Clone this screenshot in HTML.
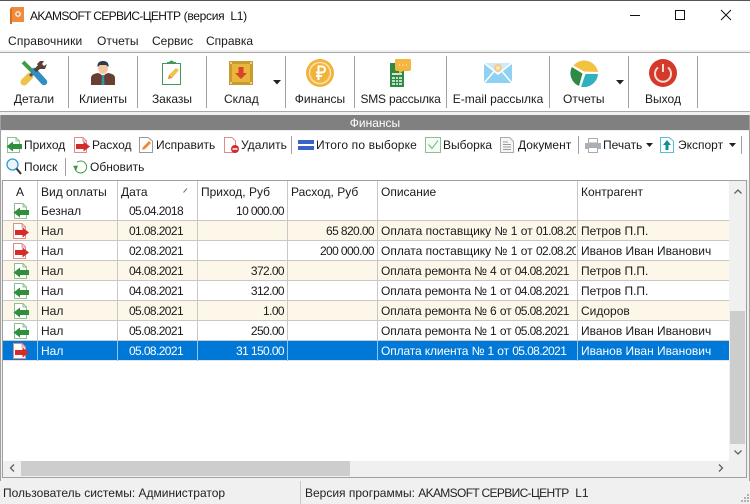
<!DOCTYPE html>
<html lang="ru"><head><meta charset="utf-8"><style>
html,body{margin:0;padding:0;width:750px;height:504px;overflow:hidden;background:#f0f0f0}
body{position:relative;font:12px "Liberation Sans",sans-serif;color:#1a1a1a}
.a,.t{position:absolute}
.t{white-space:nowrap;line-height:16px;height:16px}
.c{text-align:center}.r{text-align:right}
svg{position:absolute;overflow:visible}
.sep{position:absolute;width:1px;background:#a0a0a0}
.cell{position:absolute;overflow:hidden;white-space:nowrap;line-height:20px;height:20px}
.vl{position:absolute;width:1px;background:#c8c8c8}
.hl{position:absolute;height:1px;background:#c8c8c8;left:3px;width:726px}
.n{letter-spacing:-.6px}
.p{letter-spacing:-.12px}
.k{letter-spacing:-.65px}
</style></head><body>
<svg width="0" height="0" style="position:absolute"><defs>
<symbol id="in" viewBox="0 0 16 16"><path d="M1.500 .5H10L13.500 4V15.500H1.500Z" fill="#fff" stroke="#8fbe92"/><path d="M10 .5V4H13.500" fill="none" stroke="#8fbe92"/><path d="M.5 9.500 7 4.500V7H16V12H7V14.500Z" fill="#2f8f3d"/></symbol>
<symbol id="out" viewBox="0 0 16 16"><path d="M.5 .5H9L12.500 4V15.500H.5Z" fill="#fff" stroke="#dd8d8d"/><path d="M9 .5V4H12.500" fill="none" stroke="#dd8d8d"/><path d="M16 9.500 9.500 4.500V7H2V12H9.500V14.500Z" fill="#d42b2b"/></symbol>
</defs></svg>

<!-- title bar -->
<div class="a" style="left:0;top:0;width:750px;height:1px;background:#555"></div>
<div class="a" style="left:0;top:1px;width:750px;height:49px;background:#fff"></div>
<svg style="left:10px;top:7px" width="14" height="17" viewBox="0 0 14 17"><path d="M1 0H14V15H1Z" fill="#f08a3c"/><path d="M0 1.500H2V17H0Z" fill="#d96f22"/><circle cx="8" cy="7" r="2.200" fill="none" stroke="#fff" stroke-width="1.200"/></svg>
<div class="t" style="left:30px;top:8px;color:#111"><span class="k">AKAMSOFT СЕРВИС-ЦЕНТР</span> <span style="letter-spacing:-.3px">(версия&nbsp; L1)</span></div>
<svg style="left:630px;top:9px" width="110" height="13" viewBox="0 0 110 13"><path d="M0 6.500H10" stroke="#111"/><path d="M45.500 1.500H54.500V10.500H45.500Z" fill="none" stroke="#111"/><path d="M91 1 101 11M101 1 91 11" stroke="#111" fill="none"/></svg>
<div class="t" style="left:8px;top:33px;letter-spacing:.15px">Справочники</div>
<div class="t" style="left:97px;top:33px">Отчеты</div>
<div class="t" style="left:152px;top:33px">Сервис</div>
<div class="t" style="left:206px;top:33px">Справка</div>

<!-- main toolbar -->
<div class="a" style="left:0;top:52px;width:750px;height:1px;background:#a8a8a8"></div>
<div class="a" style="left:0;top:53px;width:750px;height:58px;background:#fff"></div>
<div class="a" style="left:0;top:111px;width:750px;height:1px;background:#a8a8a8"></div>
<div class="sep" style="left:68px;top:56px;height:52px"></div>
<div class="sep" style="left:137px;top:56px;height:52px"></div>
<div class="sep" style="left:206px;top:56px;height:52px"></div>
<div class="sep" style="left:285px;top:56px;height:52px"></div>
<div class="sep" style="left:354px;top:56px;height:52px"></div>
<div class="sep" style="left:446px;top:56px;height:52px"></div>
<div class="sep" style="left:549px;top:56px;height:52px"></div>
<div class="sep" style="left:628px;top:56px;height:52px"></div>
<div class="sep" style="left:697px;top:56px;height:52px"></div>

<svg style="left:21px;top:60px" width="27" height="26" viewBox="0 0 27 26"><path d="M2 2 14 14" stroke="#3f9a46" stroke-width="4"/><path d="M9 16 3 22" stroke="#f0c24a" stroke-width="7" stroke-linecap="round"/><path d="M13 12 9 16" stroke="#555" stroke-width="3"/><path d="M13 11 23 22" stroke="#2f8fc0" stroke-width="6.500" stroke-linecap="round"/><path d="M14 11 20 5" stroke="#5a4038" stroke-width="4"/><path d="M19 1 16 4 19 9 24 9 26 4 23 6 21 4 23 1Z" fill="#5a4038"/></svg>
<svg style="left:91px;top:61px" width="24" height="24" viewBox="0 0 24 24"><path d="M0 24V17Q0 13 7 12L12 14 17 12Q24 13 24 17V24Z" fill="#6a3f33"/><path d="M9 12H15L12 16Z" fill="#fff"/><path d="M11 14H13L13.500 24H10.500Z" fill="#2a9aa8"/><ellipse cx="12" cy="7" rx="5" ry="6" fill="#f4c5a3"/><path d="M6.500 6Q6 0 12 0T17.500 6L15 4H9Z" fill="#2c3a4a"/></svg>
<svg style="left:161px;top:60px" width="21" height="26" viewBox="0 0 21 26"><path d="M1.500 3.500H19.500V24.500H1.500Z" fill="#fff" stroke="#3f9a5c"/><path d="M6 4V2H8Q10.500-1 13 2H15V4Z" fill="#3f9a5c"/><path d="M7 19 8 15 15 8 18 10 11 18Z" fill="#f0c24a"/><path d="M7 19 8 15 11 18Z" fill="#e88c3a"/></svg>
<svg style="left:229px;top:61px" width="24" height="24" viewBox="0 0 24 24"><path d="M0 0H24V24H0Z" fill="#c99a2e"/><path d="M3 3H21V21H3Z" fill="#e9b63c"/><path d="M9.500 6H14.500V12H18L12 18 6 12H9.500Z" fill="#d9432a"/><g fill="#f5e2a8"><circle cx="2" cy="2" r="1"/><circle cx="22" cy="2" r="1"/><circle cx="2" cy="22" r="1"/><circle cx="22" cy="22" r="1"/></g></svg>
<svg style="left:273px;top:80px" width="8" height="5" viewBox="0 0 8 5"><path d="M0 0H8L4 4.500Z" fill="#222"/></svg>
<svg style="left:306px;top:59px" width="28" height="28" viewBox="0 0 28 28"><circle cx="14" cy="14" r="14" fill="#f1b33c"/><circle cx="14" cy="14" r="10.500" fill="none" stroke="#fbe3ae" stroke-width="1.500"/><path d="M12.500 21V7.500H16A3 3 0 0 1 16 13.500H10M10 17H16" fill="none" stroke="#fff" stroke-width="2"/></svg>
<svg style="left:389px;top:59px" width="23" height="28" viewBox="0 0 23 28"><path d="M1 4H15V28H1Z" fill="#2f8a46"/><path d="M3 14H13V16H3Z" fill="#cfe8d4"/><path d="M3 18H13V26H3Z" fill="#bfe0c6"/><path d="M3 20.500H13M3 23.500H13M6.500 18V26M9.500 18V26" stroke="#2f8a46"/><path d="M7 0H21Q22 0 22 1V10Q22 12 20 12H14L10 15V12H8Q6 12 6 10V1Q6 0 7 0Z" fill="#f3b73f"/><path d="M10 6H11M13.500 6H14.500M17 6H18" stroke="#fff"/></svg>
<svg style="left:484px;top:63px" width="28" height="20" viewBox="0 0 28 20"><path d="M0 0H28V20H0Z" fill="#8ed1f3"/><path d="M0 0 14 11 28 0" fill="#cdeafa"/><path d="M0 0 14 11 28 0M0 20 10 8.500M28 20 18 8.500" fill="none" stroke="#fff" stroke-width="1.500"/><circle cx="14" cy="5" r="4" fill="#f5c98a"/><circle cx="14" cy="5" r="2" fill="#f9e3c0"/></svg>
<svg style="left:570px;top:59px" width="28" height="28" viewBox="0 0 28 28"><path d="M14 12.500 3.500 6.500A14 14 0 0 1 28 13Z" fill="#f4c240"/><path d="M15.500 15H28A14 14 0 0 1 11 27.700Z" fill="#2fb2c0"/><path d="M12.500 14.500 1.800 8A14 14 0 0 0 9 27Z" fill="#2f8a46"/></svg>
<svg style="left:616px;top:80px" width="8" height="5" viewBox="0 0 8 5"><path d="M0 0H8L4 4.500Z" fill="#222"/></svg>
<svg style="left:649px;top:59px" width="28" height="28" viewBox="0 0 28 28"><circle cx="14" cy="14" r="14" fill="#d5392b"/><path d="M9 8.500A8 8 0 1 0 19 8.500" fill="none" stroke="#f9dcd4" stroke-width="2"/><path d="M14 5V13" stroke="#f9dcd4" stroke-width="2"/></svg>

<div class="t c" style="left:0;top:91px;width:68px">Детали</div>
<div class="t c" style="left:69px;top:91px;width:68px">Клиенты</div>
<div class="t c" style="left:138px;top:91px;width:68px">Заказы</div>
<div class="t" style="left:224px;top:91px">Склад</div>
<div class="t c" style="left:286px;top:91px;width:68px">Финансы</div>
<div class="t c" style="left:355px;top:91px;width:91px;letter-spacing:-.2px">SMS рассылка</div>
<div class="t c" style="left:447px;top:91px;width:102px">E-mail рассылка</div>
<div class="t" style="left:563px;top:91px">Отчеты</div>
<div class="t c" style="left:629px;top:91px;width:68px">Выход</div>

<!-- Panel -->
<div class="a" style="left:1px;top:115px;width:748px;height:15px;background:#808080"></div>
<div class="t c" style="left:0;top:116px;width:750px;color:#fff;line-height:15px">Финансы</div>
<div class="a" style="left:1px;top:131px;width:748px;height:49px;background:#fff"></div>
<div class="a" style="left:0;top:115px;width:1px;height:366px;background:#a0a0a0"></div>
<div class="a" style="left:749px;top:115px;width:1px;height:366px;background:#a0a0a0"></div>

<!-- sub toolbar -->
<svg style="left:6px;top:137px" width="16" height="16"><use href="#in"/></svg>
<div class="t" style="left:24px;top:137px">Приход</div>
<svg style="left:74px;top:137px" width="16" height="16"><use href="#out"/></svg>
<div class="t" style="left:92px;top:137px">Расход</div>
<svg style="left:139px;top:137px" width="14" height="16" viewBox="0 0 14 16"><path d="M.5.500H9L13.500 4V15.500H.5Z" fill="#fff" stroke="#999"/><path d="M3 13 4 10 10 4 12 6 6 12Z" fill="#ec8b35"/></svg>
<div class="t" style="left:156px;top:137px">Исправить</div>
<svg style="left:224px;top:137px" width="16" height="16" viewBox="0 0 16 16"><path d="M.5.500H8L11.500 4V15.500H.5Z" fill="#fff" stroke="#dd8d8d"/><circle cx="11" cy="12" r="4" fill="#d42b2b"/><path d="M8.500 12H13.500" stroke="#fff" stroke-width="1.500"/></svg>
<div class="t" style="left:241px;top:137px">Удалить</div>
<div class="sep" style="left:291px;top:136px;height:18px"></div>
<svg style="left:298px;top:140px" width="16" height="10"><path d="M0 0H16V4H0ZM0 6H16V10H0Z" fill="#3a62c8"/></svg>
<div class="t" style="left:316px;top:137px;letter-spacing:.15px">Итого по выборке</div>
<svg style="left:425px;top:137px" width="16" height="16" viewBox="0 0 16 16"><path d="M.5.500H15.500V15.500H.5Z" fill="#f4fbf4" stroke="#8fbe92"/><path d="M3.500 7.500 7 11.500 13 3.500" fill="none" stroke="#6bb27a"/></svg>
<div class="t" style="left:443px;top:137px">Выборка</div>
<svg style="left:500px;top:137px" width="14" height="16" viewBox="0 0 14 16"><path d="M.5.500H9.500L13.500 4.500V15.500H.5Z" fill="#f6f6f6" stroke="#aaa"/><path d="M3 5H8M3 7.500H11M3 10H11M3 12.500H11" stroke="#999"/></svg>
<div class="t" style="left:518px;top:137px">Документ</div>
<div class="sep" style="left:578px;top:136px;height:18px"></div>
<svg style="left:585px;top:138px" width="16" height="15" viewBox="0 0 16 15"><path d="M3.500.5H12.500V5H3.500Z" fill="#fff" stroke="#aaa"/><path d="M0 5H16V11H0Z" fill="#a9b0b8"/><path d="M3.500 9.500H12.500V14.500H3.500Z" fill="#fff" stroke="#aaa"/></svg>
<div class="t" style="left:603px;top:137px">Печать</div>
<svg style="left:646px;top:143px" width="7" height="4"><path d="M0 0H7L3.500 4Z" fill="#222"/></svg>
<svg style="left:660px;top:137px" width="14" height="16" viewBox="0 0 14 16"><path d="M.5.500H9L13.500 4V15.500H.5Z" fill="#fff" stroke="#5cc0cc"/><path d="M7 3 11 8H8.500V13H5.500V8H3Z" fill="#0f8f9e"/></svg>
<div class="t" style="left:678px;top:137px">Экспорт</div>
<svg style="left:729px;top:143px" width="7" height="4"><path d="M0 0H7L3.500 4Z" fill="#222"/></svg>
<div class="sep" style="left:741px;top:136px;height:18px"></div>

<svg style="left:6px;top:158px" width="16" height="17" viewBox="0 0 16 17"><circle cx="6.500" cy="6.500" r="5.500" fill="#eaf6fc" stroke="#3a9ad0" stroke-width="1.300"/><path d="M10.500 10.500 15 16" stroke="#333" stroke-width="2"/></svg>
<div class="t" style="left:24px;top:159px">Поиск</div>
<div class="sep" style="left:65px;top:158px;height:18px"></div>
<svg style="left:73px;top:160px" width="15" height="14" viewBox="0 0 15 14"><path d="M4 2.200A6 6 0 1 1 2 9" fill="none" stroke="#3f9a46"/><path d="M0 6 5 5.500 3 11Z" fill="#3f9a46"/></svg>
<div class="t" style="left:90px;top:159px">Обновить</div>

<!-- grid -->
<div class="a" style="left:2px;top:180px;width:745px;height:298px;background:#fff;border:1px solid #a0a0a0;box-sizing:border-box"></div>
<div class="a" style="left:3px;top:221px;width:726px;height:20px;background:#fdf7ea"></div>
<div class="a" style="left:3px;top:261px;width:726px;height:20px;background:#fdf7ea"></div>
<div class="a" style="left:3px;top:301px;width:726px;height:20px;background:#fdf7ea"></div>
<div class="a" style="left:3px;top:341px;width:726px;height:20px;background:#0078d7"></div>

<div class="hl" style="top:220px"></div><div class="hl" style="top:240px"></div><div class="hl" style="top:260px"></div><div class="hl" style="top:280px"></div><div class="hl" style="top:300px"></div><div class="hl" style="top:320px"></div><div class="hl" style="top:340px"></div>
<div class="hl" style="top:360px;background:#e4e4e4"></div>
<div class="vl" style="left:37px;top:181px;height:180px"></div>
<div class="vl" style="left:117px;top:181px;height:180px"></div>
<div class="vl" style="left:197px;top:181px;height:180px"></div>
<div class="vl" style="left:287px;top:181px;height:180px"></div>
<div class="vl" style="left:377px;top:181px;height:180px"></div>
<div class="vl" style="left:577px;top:181px;height:180px"></div>

<div class="t c" style="left:3px;top:184px;width:34px">А</div>
<div class="t" style="left:41px;top:184px">Вид оплаты</div>
<div class="t" style="left:121px;top:184px">Дата</div>
<svg style="left:183px;top:188px" width="5" height="5"><path d="M.5 4.500 4 .5" stroke="#777" fill="none"/></svg>
<div class="t" style="left:201px;top:184px">Приход, Руб</div>
<div class="t" style="left:291px;top:184px">Расход, Руб</div>
<div class="t" style="left:381px;top:184px">Описание</div>
<div class="t" style="left:581px;top:184px">Контрагент</div>

<svg style="left:13px;top:203px" width="16" height="16"><use href="#in"/></svg>
<div class="cell" style="left:41px;top:201px">Безнал</div>
<div class="cell c n" style="left:118px;top:201px;width:76px">05.04.2018</div>
<div class="cell r n" style="left:198px;top:201px;width:86px">10 000.00</div>

<svg style="left:13px;top:223px" width="16" height="16"><use href="#out"/></svg>
<div class="cell" style="left:41px;top:221px">Нал</div>
<div class="cell c n" style="left:118px;top:221px;width:76px">01.08.2021</div>
<div class="cell r n" style="left:288px;top:221px;width:86px">65 820.00</div>
<div class="cell" style="left:381px;top:221px;width:195px">Оплата поставщику № 1 от <span class="n">01.08.2021</span></div>
<div class="cell" style="left:581px;top:221px">Петров П.П.</div>

<svg style="left:13px;top:243px" width="16" height="16"><use href="#out"/></svg>
<div class="cell" style="left:41px;top:241px">Нал</div>
<div class="cell c n" style="left:118px;top:241px;width:76px">02.08.2021</div>
<div class="cell r n" style="left:288px;top:241px;width:86px">200 000.00</div>
<div class="cell" style="left:381px;top:241px;width:195px">Оплата поставщику № 1 от <span class="n">02.08.2021</span></div>
<div class="cell" style="left:581px;top:241px">Иванов Иван Иванович</div>

<svg style="left:13px;top:263px" width="16" height="16"><use href="#in"/></svg>
<div class="cell" style="left:41px;top:261px">Нал</div>
<div class="cell c n" style="left:118px;top:261px;width:76px">04.08.2021</div>
<div class="cell r n" style="left:198px;top:261px;width:86px">372.00</div>
<div class="cell" style="left:381px;top:261px;width:196px"><span class="p">Оплата ремонта № 4 от </span><span class="n">04.08.2021</span></div>
<div class="cell" style="left:581px;top:261px">Петров П.П.</div>

<svg style="left:13px;top:283px" width="16" height="16"><use href="#in"/></svg>
<div class="cell" style="left:41px;top:281px">Нал</div>
<div class="cell c n" style="left:118px;top:281px;width:76px">04.08.2021</div>
<div class="cell r n" style="left:198px;top:281px;width:86px">312.00</div>
<div class="cell" style="left:381px;top:281px;width:196px"><span class="p">Оплата ремонта № 1 от </span><span class="n">04.08.2021</span></div>
<div class="cell" style="left:581px;top:281px">Петров П.П.</div>

<svg style="left:13px;top:303px" width="16" height="16"><use href="#in"/></svg>
<div class="cell" style="left:41px;top:301px">Нал</div>
<div class="cell c n" style="left:118px;top:301px;width:76px">05.08.2021</div>
<div class="cell r n" style="left:198px;top:301px;width:86px">1.00</div>
<div class="cell" style="left:381px;top:301px;width:196px"><span class="p">Оплата ремонта № 6 от </span><span class="n">05.08.2021</span></div>
<div class="cell" style="left:581px;top:301px">Сидоров</div>

<svg style="left:13px;top:323px" width="16" height="16"><use href="#in"/></svg>
<div class="cell" style="left:41px;top:321px">Нал</div>
<div class="cell c n" style="left:118px;top:321px;width:76px">05.08.2021</div>
<div class="cell r n" style="left:198px;top:321px;width:86px">250.00</div>
<div class="cell" style="left:381px;top:321px;width:196px"><span class="p">Оплата ремонта № 1 от </span><span class="n">05.08.2021</span></div>
<div class="cell" style="left:581px;top:321px">Иванов Иван Иванович</div>

<svg style="left:13px;top:343px" width="16" height="16"><use href="#out"/></svg>
<div style="color:#fff">
<div class="cell" style="left:41px;top:341px">Нал</div>
<div class="cell c n" style="left:118px;top:341px;width:76px">05.08.2021</div>
<div class="cell r n" style="left:198px;top:341px;width:86px">31 150.00</div>
<div class="cell" style="left:381px;top:341px;width:196px"><span class="p">Оплата клиента № 1 от </span><span class="n">05.08.2021</span></div>
<div class="cell" style="left:581px;top:341px">Иванов Иван Иванович</div>
</div>
<div class="vl" style="left:37px;top:341px;height:20px;background:#8fc4ee"></div>
<div class="vl" style="left:117px;top:341px;height:20px;background:#8fc4ee"></div>
<div class="vl" style="left:197px;top:341px;height:20px;background:#8fc4ee"></div>
<div class="vl" style="left:287px;top:341px;height:20px;background:#8fc4ee"></div>
<div class="vl" style="left:377px;top:341px;height:20px;background:#8fc4ee"></div>
<div class="vl" style="left:577px;top:341px;height:20px;background:#8fc4ee"></div>

<!-- scrollbars -->
<div class="a" style="left:729px;top:181px;width:17px;height:280px;background:#f0f0f0"></div>
<div class="a" style="left:730px;top:311px;width:15px;height:133px;background:#cdcdcd"></div>
<svg style="left:734px;top:189px" width="8" height="5"><path d="M.5 4.500 4 1 7.500 4.500" fill="none" stroke="#606060" stroke-width="1.300"/></svg>
<svg style="left:734px;top:450px" width="8" height="5"><path d="M.5.500 4 4 7.500.5" fill="none" stroke="#606060" stroke-width="1.300"/></svg>
<div class="a" style="left:3px;top:461px;width:743px;height:16px;background:#f0f0f0"></div>
<div class="a" style="left:21px;top:461px;width:329px;height:15px;background:#cdcdcd"></div>
<svg style="left:9px;top:464px" width="6" height="8"><path d="M5 .5 1.500 4 5 7.500" fill="none" stroke="#606060" stroke-width="1.300"/></svg>
<svg style="left:718px;top:464px" width="6" height="8"><path d="M1 .5 4.500 4 1 7.500" fill="none" stroke="#606060" stroke-width="1.300"/></svg>

<!-- status bar -->
<div class="a" style="left:0;top:481px;width:750px;height:23px;background:#f0f0f0"></div>
<div class="a" style="left:300px;top:481px;width:1px;height:23px;background:#c8c8c8"></div>
<div class="t" style="left:3px;top:485px;color:#222">Пользователь системы: Администратор</div>
<div class="t" style="left:305px;top:485px;color:#222">Версия программы: <span class="k">AKAMSOFT СЕРВИС-ЦЕНТР</span>&nbsp; L1</div>
<svg style="left:740px;top:494px" width="9" height="9" fill="#b0b0b0"><path d="M7 0h2v2H7ZM4 3h2v2H4ZM7 3h2v2H7ZM1 6h2v2H1ZM4 6h2v2H4ZM7 6h2v2H7Z"/></svg>
</body></html>
